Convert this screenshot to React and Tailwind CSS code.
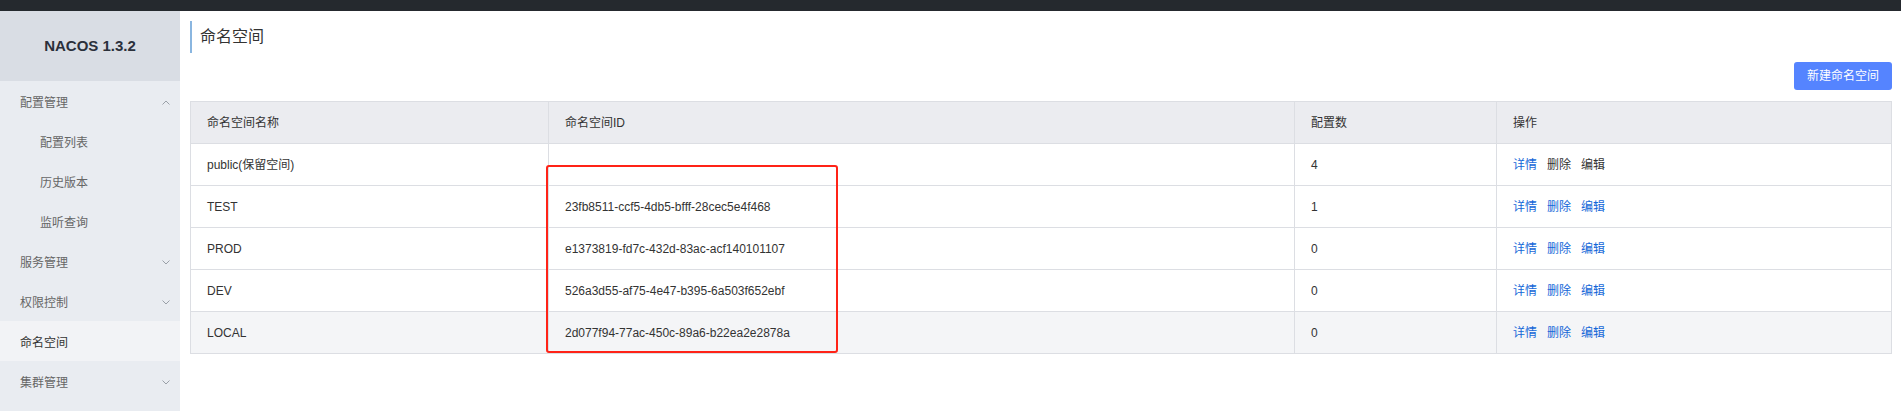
const menu = [
  { label: '配置管理', arrow: 'up' },
  { label: '配置列表', sub: true },
  { label: '历史版本', sub: true },
  { label: '监听查询', sub: true },
  { label: '服务管理', arrow: 'down' },
  { label: '权限控制', arrow: 'down' },
  { label: '命名空间', active: true },
  { label: '集群管理', arrow: 'down' },
];

const rows = [
  { name: 'public(保留空间)', id: '', count: 4, locked: true },
  { name: 'TEST', id: '23fb8511-ccf5-4db5-bfff-28cec5e4f468', count: 1 },
  { name: 'PROD', id: 'e1373819-fd7c-432d-83ac-acf140101107', count: 0 },
  { name: 'DEV', id: '526a3d55-af75-4e47-b395-6a503f652ebf', count: 0 },
  { name: 'LOCAL', id: '2d077f94-77ac-450c-89a6-b22ea2e2878a', count: 0, hover: true },
];

function Chevron({ dir }) {
  return (
    <svg width="8" height="5" viewBox="0 0 8 5" className="text-[#9aa0a8]">
      <path
        d={dir === 'up' ? 'M0.5 4.5 L4 1 L7.5 4.5' : 'M0.5 0.5 L4 4 L7.5 0.5'}
        fill="none"
        stroke="currentColor"
        strokeWidth="1"
      />
    </svg>
  );
}

export default function App() {
  return (
    <div
      className="relative flex h-[411px] w-[1901px] flex-col overflow-hidden bg-white text-xs text-[#333]"
      style={{ fontFamily: '"Liberation Sans", "Noto Sans CJK SC", sans-serif' }}
    >
      <div className="h-[11px] shrink-0 bg-[#25292e]" />

      <div className="flex flex-1">
        <aside className="w-[180px] shrink-0 bg-[#e9ecf1]">
          <div className="flex h-[70px] items-center justify-center bg-[#d9dde4] text-[15px] font-bold text-[#2b303b]">
            NACOS 1.3.2
          </div>
          <nav>
            {menu.map((item) => (
              <div
                key={item.label}
                className={[
                  'flex h-10 items-center justify-between pr-[10px] pt-[3px]',
                  item.sub ? 'pl-10' : 'pl-5',
                  item.active ? 'bg-[#f2f3f6] text-[#333]' : 'text-[#666]',
                ].join(' ')}
              >
                <span>{item.label}</span>
                {item.arrow && <Chevron dir={item.arrow} />}
              </div>
            ))}
          </nav>
        </aside>

        <main className="flex-1 pl-[10px] pr-[9px] pt-[10px]">
          <div className="flex h-8 items-center border-l-2 border-[#8ab6e0] pl-2 text-base text-[#333]">
            命名空间
          </div>

          <div className="mt-[9px] flex justify-end">
            <button
              type="button"
              className="h-7 w-[98px] rounded-[3px] bg-[#5584ff] text-xs text-white"
            >
              新建命名空间
            </button>
          </div>

          <table className="mt-[11px] w-[1702px] table-fixed border-collapse border border-[#dcdee3]">
            <colgroup>
              <col className="w-[358px]" />
              <col className="w-[746px]" />
              <col className="w-[202px]" />
              <col />
            </colgroup>
            <thead>
              <tr className="h-[42px] bg-[#ebecf0] text-left">
                <th className="border border-[#dcdee3] px-4 font-normal">命名空间名称</th>
                <th className="border border-[#dcdee3] px-4 font-normal">命名空间ID</th>
                <th className="border border-[#dcdee3] px-4 font-normal">配置数</th>
                <th className="border border-[#dcdee3] px-4 font-normal">操作</th>
              </tr>
            </thead>
            <tbody>
              {rows.map((r) => (
                <tr key={r.name} className={['h-[42px]', r.hover ? 'bg-[#f4f5f7]' : 'bg-white'].join(' ')}>
                  <td className="border border-[#dcdee3] px-4">{r.name}</td>
                  <td className="border border-[#dcdee3] px-4">{r.id}</td>
                  <td className="border border-[#dcdee3] px-4">{r.count}</td>
                  <td className="border border-[#dcdee3] px-4">
                    <span className="text-[#1467d8]">详情</span>
                    <span className={['ml-[10px]', r.locked ? 'text-[#333]' : 'text-[#1467d8]'].join(' ')}>删除</span>
                    <span className={['ml-[10px]', r.locked ? 'text-[#333]' : 'text-[#1467d8]'].join(' ')}>编辑</span>
                  </td>
                </tr>
              ))}
            </tbody>
          </table>
        </main>
      </div>

      {/* red highlight box drawn over the ID column */}
      <div className="pointer-events-none absolute left-[546px] top-[165px] h-[188px] w-[292px] rounded-[3px] border-2 border-[#ff2317]" />
    </div>
  );
}
